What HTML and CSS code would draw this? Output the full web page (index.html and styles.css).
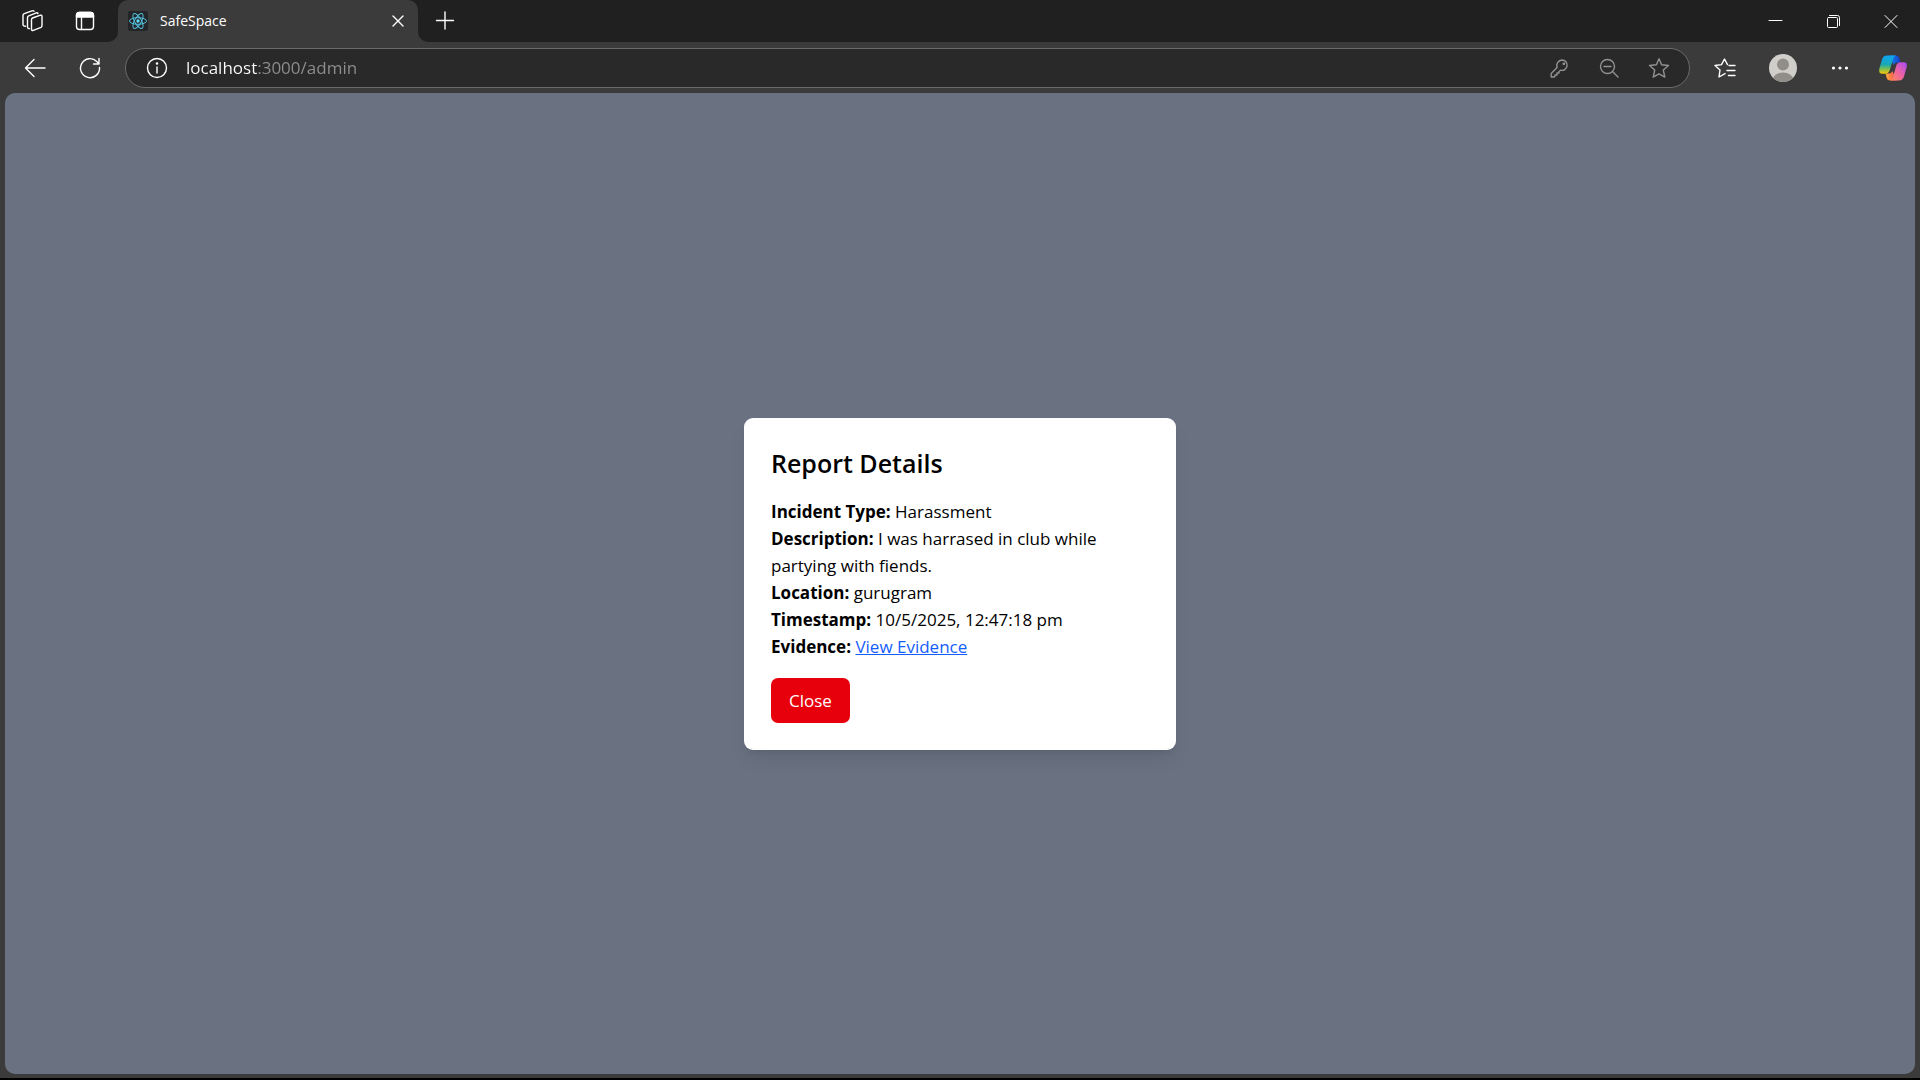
FILE: index.html
```html
<!DOCTYPE html>
<html lang="en">
<head>
<meta charset="utf-8">
<title>SafeSpace</title>
<link rel="stylesheet" href="styles.css">
</head>
<body>
<div class="browser">
  <header class="tabstrip">
    <div class="strip-start">
      <button class="icon-btn" aria-label="Workspaces">
        <svg class="icon" viewBox="0 0 24 24"><path d="M10.500 10.500Q10.500 9.500 11.500 9L19.500 6.200Q21 5.800 21 7.300V16.500Q21 17.800 20 18.300L12.300 21.400Q10.500 22 10.500 20.300Z"/><path d="M8.500 19.600Q6.500 19.700 6.500 17.800V8.700Q6.500 7.300 7.700 6.800L15.300 3.900Q16.500 3.500 17 4.600"/><path d="M4.500 17.300Q2 17.300 2 15.300V6.500Q2 5.200 3.200 4.700L11 1.800Q12.500 1.300 13 2.300"/></svg>
      </button>
      <button class="icon-btn" aria-label="Tab actions">
        <svg class="icon" viewBox="0 0 24 24"><rect x="3.500" y="3.500" width="17" height="17" rx="3"/><path d="M3.500 8V6.500a3 3 0 0 1 3-3h11a3 3 0 0 1 3 3V8Z" fill="currentColor"/><path d="M8.500 8v12.500"/></svg>
      </button>
    </div>
    <div class="tab-slot">
      <div class="tab">
        <svg class="favicon" viewBox="0 0 20 20"><rect width="20" height="20" rx="2" fill="#232528"/><g fill="none" stroke="#53c1de" stroke-width="1"><ellipse cx="10" cy="10" rx="8.500" ry="3.300"/><ellipse cx="10" cy="10" rx="8.500" ry="3.300" transform="rotate(60 10 10)"/><ellipse cx="10" cy="10" rx="8.500" ry="3.300" transform="rotate(120 10 10)"/></g><circle cx="10" cy="10" r="1.700" fill="#61dafb"/></svg>
        <span class="tab-title">SafeSpace</span>
        <button class="tab-close" aria-label="Close tab"><svg class="icon" viewBox="0 0 24 24"><path d="m7 7 10 10M17 7 7 17"/></svg></button>
      </div>
    </div>
    <div class="strip-end">
      <button class="icon-btn" aria-label="New tab"><svg class="icon" viewBox="0 0 24 24"><path d="M4.500 11.500h17M13 3v17"/></svg></button>
      <div class="window-controls">
        <button class="window-btn" aria-label="Minimize"><svg class="icon" viewBox="0 0 24 24"><path d="M6 11.500h13"/></svg></button>
        <button class="window-btn" aria-label="Restore"><svg class="icon" viewBox="0 0 24 24"><rect x="6.500" y="8.500" width="10" height="10" rx="1"/><path d="M8.500 6.500h8q2 0 2 2v8"/></svg></button>
        <button class="window-btn" aria-label="Close window"><svg class="icon" viewBox="0 0 24 24"><path d="m6 6.500 12 12M18 6.500l-12 12"/></svg></button>
      </div>
    </div>
  </header>

  <nav class="toolbar" aria-label="Browser toolbar">
    <button class="icon-btn" aria-label="Back"><svg class="icon" viewBox="0 0 24 24"><path d="M22 12H2.500M11 3.500 2.500 12l8.500 8.500"/></svg></button>
    <button class="icon-btn" aria-label="Refresh"><svg class="icon" viewBox="0 0 24 24"><path d="M21.500 11.500A9.500 9.500 0 1 1 18.800 5.500L21 8M21 2.500V8h-5.500"/></svg></button>
    <div class="address-bar">
      <button class="address-btn" aria-label="Site information"><svg class="icon" viewBox="0 0 24 24"><circle cx="12" cy="12" r="9.500"/><path d="M12 11v6"/><circle cx="12" cy="7.500" r=".6" fill="currentColor"/></svg></button>
      <input class="address" type="text" value="localhost:3000/admin" aria-label="Address" spellcheck="false">
      <button class="address-btn muted" aria-label="Passwords"><svg class="icon" viewBox="0 0 24 24"><path d="M15 4a5.200 5.200 0 1 1-1.500 10.200L12 15.500v1.500h-2v2H8v1.200l-.8.800H4.200V17.500l5.900-5.900A5.600 5.600 0 0 1 15 4Z"/><circle cx="16.800" cy="7.800" r=".7" fill="currentColor"/></svg></button>
      <button class="address-btn muted" aria-label="Zoom out"><svg class="icon" viewBox="0 0 24 24"><circle cx="10.500" cy="10.500" r="7"/><path d="m15.500 15.500 5.500 5.500M7 10.500h7"/></svg></button>
      <button class="address-btn muted" aria-label="Add to favorites"><svg class="icon" viewBox="0 0 24 24"><path d="m12 2.800 2.600 6 6.900.7-5.200 4.600 1.500 7L12 17.800l-5.800 3.300 1.500-7-5.200-4.600 6.900-.7Z"/></svg></button>
    </div>
    <div class="toolbar-end">
      <button class="tool-btn" aria-label="Favorites"><svg class="icon" viewBox="0 0 24 24"><path d="M12 17.600 6 21l1-7-5-4.500 6.500-.9L11.500 3l3 5.600M16 9.500h6M14 14.500h8M15.500 19.500H22"/></svg></button>
      <button class="tool-btn" aria-label="Profile"><svg class="avatar" viewBox="0 0 28 28"><clipPath id="face"><circle cx="14" cy="14" r="14"/></clipPath><g clip-path="url(#face)"><path d="M0 0h28v28H0z" fill="#d0cecb"/><circle cx="14" cy="10.500" r="6" fill="#918e8a"/><ellipse cx="14" cy="26.500" rx="10.500" ry="8" fill="#918e8a"/></g></svg></button>
      <button class="tool-btn" aria-label="Settings and more"><svg class="icon" viewBox="0 0 24 24"><g fill="currentColor" stroke="none"><circle cx="4.500" cy="12" r="1.600"/><circle cx="11" cy="12" r="1.600"/><circle cx="17.500" cy="12" r="1.600"/></g></svg></button>
      <button class="copilot-btn" aria-label="Copilot">
        <svg class="copilot" viewBox="0 0 28 28">
          <defs>
            <linearGradient id="cool" x1="0" y1="0" x2="0" y2="1"><stop offset="0" stop-color="#0ea5f5"/><stop offset=".5" stop-color="#18a9b5"/><stop offset=".75" stop-color="#83bf4b"/><stop offset="1" stop-color="#f8c80a"/></linearGradient>
            <linearGradient id="warm" x1="1" y1="0" x2="0" y2="1"><stop offset="0" stop-color="#a44af5"/><stop offset=".5" stop-color="#ed62a5"/><stop offset="1" stop-color="#ff8a54"/></linearGradient>
            <linearGradient id="blue"><stop offset="0" stop-color="#168bea"/><stop offset="1" stop-color="#173ccd"/></linearGradient>
            <linearGradient id="red"><stop offset="0" stop-color="#ffb13b"/><stop offset="1" stop-color="#ef4050"/></linearGradient>
          </defs>
          <path d="M10 1.500h7Q19.500 1.500 20.300 4l1.200 4.500H18q-2.500 0-3.300 2.500Z" fill="url(#blue)"/>
          <path d="M18 26.500h-7Q8.500 26.500 7.700 24L6.500 19.500H10q2.500 0 3.300-2.500Z" fill="url(#red)"/>
          <path d="M8 1.500h9q-2 .5-2.800 3L10.800 16q-1.100 3.700-4.300 3.700H3.300Q-.5 19.700.3 15L3 5.500Q4.300 1.500 8 1.500Z" fill="url(#cool)"/>
          <path d="M20 26.500h-9q2-.5 2.800-3L17.200 12q1.100-3.700 4.300-3.700h3.200q3.800 0 3 4.700L25 22.500q-1.300 4-5 4Z" fill="url(#warm)"/>
        </svg>
      </button>
    </div>
  </nav>

  <main class="viewport">
    <section class="card" role="dialog" aria-labelledby="report-title">
      <h2 class="card-title" id="report-title">Report Details</h2>
      <p class="field"><strong>Incident Type:</strong> Harassment</p>
      <p class="field"><strong>Description:</strong> I was harrased in club while partying with fiends.</p>
      <p class="field"><strong>Location:</strong> gurugram</p>
      <p class="field"><strong>Timestamp:</strong> 10/5/2025, 12:47:18 pm</p>
      <p class="field"><strong>Evidence:</strong> <a class="link" href="#evidence">View Evidence</a></p>
      <button class="close-btn">Close</button>
    </section>
  </main>
</div>
</body>
</html>
```
FILE: styles.css
```css
* { box-sizing: border-box; }

body {
  margin: 0;
  background: #000;
  font-family: "Segoe UI", "Open Sans", sans-serif;
}

button {
  display: flex;
  align-items: center;
  justify-content: center;
  padding: 0;
  border: 0;
  background: none;
  color: inherit;
  font: inherit;
}

.browser {
  display: flex;
  flex-direction: column;
  min-height: 100vh;
  background: #3b3b3b;
  border-bottom: 2px solid #000;
  color: #fff;
}

.icon {
  width: 24px;
  height: 24px;
  fill: none;
  stroke: currentColor;
  stroke-width: 1.4;
  stroke-linecap: round;
  stroke-linejoin: round;
}

.icon-btn { width: 52px; height: 42px; }

/* Tab strip */
.tabstrip { display: flex; height: 42px; }

.strip-start {
  display: flex;
  padding: 0 7px;
  background: #202020;
  border-bottom-right-radius: 10px;
}

.tab-slot {
  width: 300px;
  background: linear-gradient(#202020 50%, #3b3b3b 50%);
}

.tab {
  display: flex;
  align-items: center;
  gap: 12px;
  height: 42px;
  padding: 0 8px 0 10px;
  background: #3b3b3b;
  border-radius: 10px 10px 0 0;
}

.favicon { width: 20px; height: 20px; }
.tab-title { flex: 1; font-size: 14px; line-height: 20px; }
.tab-close { width: 24px; height: 24px; }

.strip-end {
  display: flex;
  flex: 1;
  justify-content: space-between;
  background: #202020;
  border-bottom-left-radius: 10px;
}

.window-controls { display: flex; }
.window-btn { width: 58px; height: 42px; }
.window-btn .icon { stroke-width: 1; }

/* Toolbar */
.toolbar {
  display: flex;
  align-items: center;
  gap: 3px;
  height: 51px;
  padding: 0 4px 0 9px;
}

.address-bar {
  display: flex;
  flex: 1;
  align-items: center;
  height: 40px;
  margin-left: 6px;
  padding: 0 5px 0 6px;
  border: 1px solid #6b6b6b;
  border-radius: 20px;
  background: #292929;
}

.address-btn { width: 50px; height: 38px; }
.muted { color: #929292; }

.address {
  flex: 1;
  min-width: 0;
  padding: 0 4px;
  border: 0;
  background: linear-gradient(90deg, #fff 76px, #8f8f8f 76px);
  background-clip: text;
  -webkit-background-clip: text;
  color: transparent;
  font-family: inherit;
  font-size: 17px;
  line-height: 24px;
  outline: 0;
}

.toolbar-end { display: flex; padding-left: 3px; }
.tool-btn { width: 58px; height: 40px; }
.copilot-btn { width: 46px; height: 40px; }
.avatar,
.copilot { width: 28px; height: 28px; }

/* Page */
.viewport {
  display: flex;
  flex: 1;
  align-items: center;
  justify-content: center;
  margin: 0 5px 4px;
  border-radius: 10px;
  background: #6a7282;
}

.card {
  width: 432px;
  padding: 27px;
  border-radius: 9px;
  background: #fff;
  box-shadow: 0 11px 17px -3px rgba(0, 0, 0, .1), 0 4px 7px -4px rgba(0, 0, 0, .1);
  color: #000;
  font-size: 17px;
  line-height: 27px;
}

.card-title {
  margin: 0 0 17px;
  font-size: 25px;
  font-weight: 600;
  line-height: 36px;
}

.field { margin: 0; }
.field strong { font-weight: 700; }
.link { color: #155dfc; text-decoration: underline; }

.close-btn {
  margin-top: 18px;
  padding: 9px 18px;
  border-radius: 7px;
  background: #e7000b;
  color: #fff;
}
```
